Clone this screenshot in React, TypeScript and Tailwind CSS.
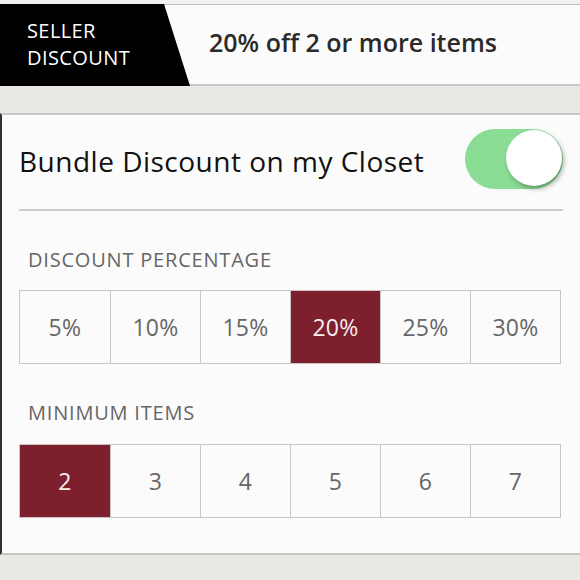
import { useState } from "react";

const percents = ["5%", "10%", "15%", "20%", "25%", "30%"];
const counts = ["2", "3", "4", "5", "6", "7"];

const Segmented = ({
  options,
  value,
  onChange,
}: {
  options: string[];
  value: string;
  onChange: (v: string) => void;
}) => (
  <div className="grid grid-cols-6 h-[74px] mx-[19px] border border-[#c6c6c6]">
    {options.map((opt, i) => (
      <button
        key={opt}
        onClick={() => onChange(opt)}
        className={
          "flex items-center justify-center text-[23px] tracking-[0.3px] " +
          (i > 0 ? "border-l border-[#c6c6c6] " : "") +
          (opt === value ? "bg-[#7e1f2d] text-[#f6eef0]" : "bg-[#fcfbfb] text-[#666]")
        }
      >
        {opt}
      </button>
    ))}
  </div>
);

export default function App() {
  const [enabled, setEnabled] = useState(true);
  const [percent, setPercent] = useState("20%");
  const [count, setCount] = useState("2");

  return (
    <div
      className="w-[580px] h-[580px] overflow-hidden flex flex-col bg-[#ebe9e5]"
      style={{ fontFamily: "'Open Sans', Lato, sans-serif" }}
    >
      <div className="h-[5px] bg-[#f2f1ef] border-b border-[#bdbdbd]" />
      <div className="h-[81px] flex bg-[#fcfbfb] border-b-2 border-[#c9c7c3]">
        <div className="w-[190px] h-[82px] -mt-[1px] bg-black text-white [clip-path:polygon(0_0,164px_0,190px_100%,0_100%)] flex flex-col justify-center pl-[27px] pb-[2px] text-[20px] leading-[27px] tracking-[0.4px]">
          <span>SELLER</span>
          <span>DISCOUNT</span>
        </div>
        <div className="flex items-center pl-[19px] pb-[4px] text-[25px] font-semibold text-[#2a2a2a]">
          20% off 2 or more items
        </div>
      </div>
      <div className="h-[27px]" />
      <div className="h-[442px] bg-[#fcfbfb] border-t-2 border-b-2 border-[#c9c7c3] border-l-2 border-l-[#333] flex flex-col">
        <div className="flex items-center justify-between h-[94px] pl-[17px] pr-[17px]">
          <span className="text-[28px] tracking-[0.5px] text-[#111] pb-[3px]">
            Bundle Discount on my Closet
          </span>
          <button
            onClick={() => setEnabled(!enabled)}
            className={
              "relative w-[98px] h-[60px] -mt-[6px] rounded-full " +
              (enabled ? "bg-[#8bdc94]" : "bg-[#e5e5e5]")
            }
          >
            <span
              className={
                "absolute top-[1px] w-[56px] h-[56px] rounded-full bg-white shadow-[2px_3px_5px_rgba(0,0,0,0.3)] " +
                (enabled ? "right-[1px]" : "left-[1px]")
              }
            />
          </button>
        </div>
        <div className="h-[2px] bg-[#cccccc] mx-[17px]" />
        <div className="pl-[26px] pt-[38px] pb-[19px] text-[20px] leading-[22px] tracking-[0.8px] text-[#666]">
          DISCOUNT PERCENTAGE
        </div>
        <div className="-ml-[2px]">
          <Segmented options={percents} value={percent} onChange={setPercent} />
        </div>
        <div className="pl-[26px] pt-[38px] pb-[20px] text-[20px] leading-[22px] tracking-[0.8px] text-[#666]">
          MINIMUM ITEMS
        </div>
        <div className="-ml-[2px]">
          <Segmented options={counts} value={count} onChange={setCount} />
        </div>
      </div>
    </div>
  );
}
